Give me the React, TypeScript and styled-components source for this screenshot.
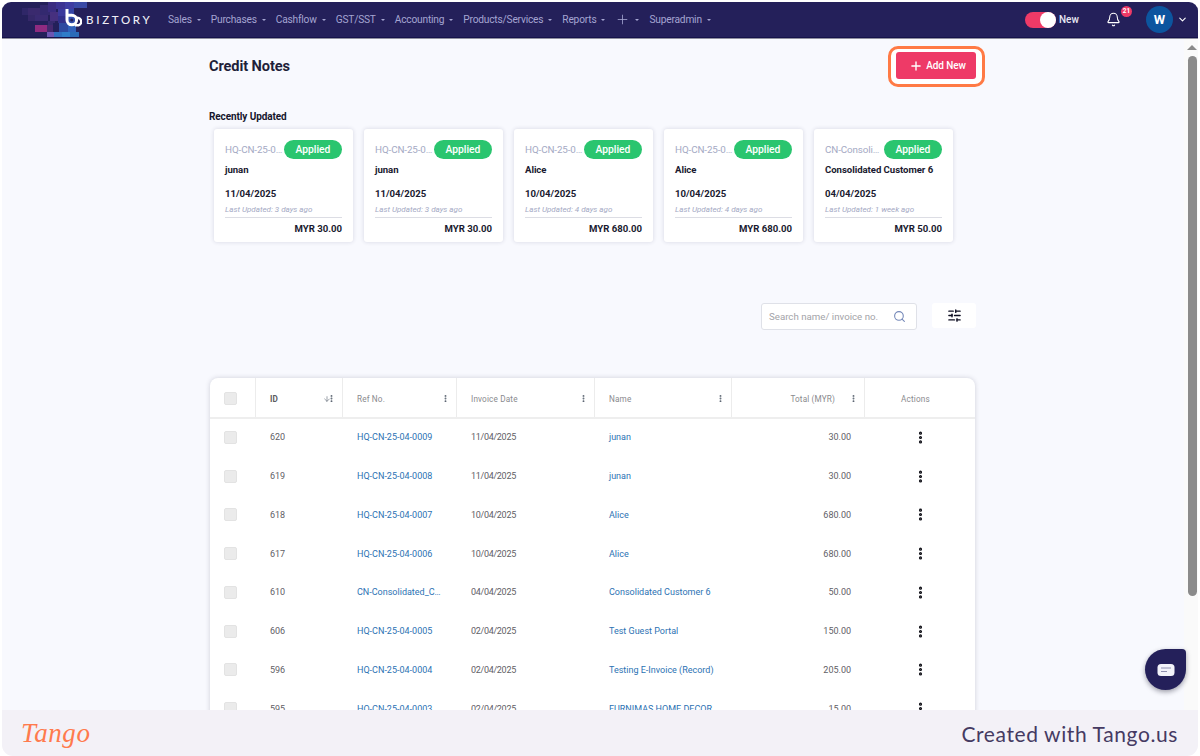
import React from "react";
import styled, { createGlobalStyle } from "styled-components";
import { Bell, ChevronDown, Search, SlidersHorizontal, Plus, ArrowDown, MoreVertical } from "lucide-react";

const Global = createGlobalStyle`
  html, body { margin: 0; padding: 0; background: #fff; }
  body { font-family: Roboto, "Liberation Sans", sans-serif; }
  * { box-sizing: border-box; }
`;

const Page = styled.div`
  width: 1200px; height: 756px; padding: 2px 2px 0; overflow: hidden; background: #fff;
`;
const Win = styled.div`
  position: relative; width: 1196px; height: 754px; display: flex; flex-direction: column;
  border-radius: 9px 9px 11px 11px; overflow: hidden;
`;
const Header = styled.header`
  position: relative; flex: 0 0 36px; display: flex; align-items: center; background: #24205a;
  border-bottom: 1px solid #15124a; box-shadow: 0 1px 0 #8f8f9f; z-index: 2;
`;
const Mosaic = styled.svg`
  position: absolute; left: 18px; top: 0; width: 70px; height: 35px;
`;
const Brand = styled.div`
  position: relative; display: flex; align-items: center; margin-left: 62px; width: 104px; flex: none;
`;
const BrandMark = styled.svg`
  margin-top: -3px; flex: none;
`;
const BrandName = styled.span`
  font-family: Lato, "Open Sans", sans-serif; font-size: 11.5px; font-weight: 500; letter-spacing: 2.7px;
  color: #eeeef6; margin-left: 4px;
`;
const Nav = styled.nav`
  display: flex; align-items: center; gap: 10px; flex: 1;
`;
const NavItem = styled.span`
  display: flex; align-items: center; gap: 4px; font-size: 10.2px; letter-spacing: -0.2px; color: #a5a5d2; white-space: nowrap;
`;
const Caret = styled.i`
  width: 0; height: 0; border: 2px solid transparent; border-top: 2.5px solid #a5a5d2; border-bottom: 0;
  margin-left: 1px;
`;
const HeaderRight = styled.div`
  display: flex; align-items: center; padding-right: 10px;
`;
const Toggle = styled.div`
  position: relative; width: 31px; height: 16px; border-radius: 8px; background: #ee3a67;
`;
const Knob = styled.i`
  position: absolute; right: 0; top: 0; width: 16px; height: 16px; border-radius: 50%; background: #fff;
`;
const NewLabel = styled.span`
  width: 19px; font-size: 10px; font-weight: 500; color: #e8e8f4; margin: 0 28px 0 3px;
`;
const BellWrap = styled.div`
  position: relative; width: 16px; height: 16px; margin-right: 24px; color: #fff;
`;
const BellBadge = styled.span`
  position: absolute; left: 15px; top: -6px; width: 11px; height: 11px; border-radius: 50%; background: #ee3a67;
  color: #fff; font-size: 6.5px; font-weight: 700; line-height: 11px; text-align: center;
`;
const Avatar = styled.div`
  width: 27px; height: 27px; border-radius: 50%; background: #0c559f; color: #fff; font-size: 13px;
  font-weight: 700; line-height: 27px; text-align: center; margin-right: 4px;
`;

const Body = styled.div`
  flex: 1; min-height: 0; display: flex;
`;
const Main = styled.main`
  flex: 1; min-width: 0; background: #f8f9fe; padding: 0 208px 0 207px; overflow: hidden;
`;
const Track = styled.div`
  flex: 0 0 14px; background: #fafafa; display: flex; flex-direction: column; align-items: flex-end; padding: 7px 1px 0 0;
`;
const ArrowUp = styled.i`
  width: 0; height: 0; border: 5px solid transparent; border-bottom: 5px solid #8a8a8a; border-top: 0;
`;
const Thumb = styled.div`
  width: 9px; height: 540px; margin-top: 6px; background: #8b8b8b; border-radius: 5px;
`;

const TitleRow = styled.div`
  display: flex; justify-content: space-between; align-items: flex-start; padding-top: 14px; height: 73px;
`;
const Title = styled.h1`
  margin: 4.5px 0 0; font-size: 14.6px; font-weight: 700; letter-spacing: -0.1px; color: #1f1f3a; line-height: 18px;
`;
const AddWrap = styled.div`
  position: relative; isolation: isolate; width: 80px; height: 27px;
  &::before {
    content: ""; position: absolute; z-index: -1; inset: -6px -9px -8px -8px; background: #fff;
    border: 3px solid #ff7a45; border-radius: 10px;
  }
`;
const AddButton = styled.button`
  width: 100%; height: 100%; border: 0; border-radius: 3px; background: #ee3a67; color: #fff;
  display: flex; align-items: center; justify-content: center; gap: 3px; padding: 0 0 0 3px;
  font: 500 10px Roboto, sans-serif; letter-spacing: -0.1px;
`;
const SubTitle = styled.h2`
  margin: 0; font-size: 10px; font-weight: 700; letter-spacing: -0.1px; color: #16162c; line-height: 12px;
`;
const Cards = styled.div`
  display: flex; gap: 11px; margin: 6px 0 0 5px;
`;
const Card = styled.article`
  width: 139px; height: 113px; flex: none; background: #fff; border-radius: 3px; padding: 11px 11px 0 11px;
  box-shadow: 0 0 4px rgba(40, 40, 80, .16);
`;
const CardTop = styled.div`
  display: flex; align-items: center; justify-content: space-between; height: 19px;
`;
const CardRef = styled.span`
  flex: 0 0 59px; font-size: 9.8px; letter-spacing: -.1px; color: #a4a9c4; white-space: nowrap; overflow: hidden; text-overflow: ellipsis;
`;
const Pill = styled.span`
  width: 58px; height: 19px; border-radius: 10px; background: #2ac56f; color: #fff; font-size: 10.3px;
  font-weight: 500; line-height: 19px; text-align: center;
`;
const CardName = styled.div`
  margin-top: 5px; height: 12px; font-size: 9.6px; font-weight: 700; line-height: 12px; color: #1a1a30; letter-spacing: -0.05px; white-space: nowrap;
`;
const CardDate = styled.div`
  margin-top: 12px; font-size: 9.6px; font-weight: 700; line-height: 12px; color: #1a1a30;
`;
const CardUpdated = styled.div`
  margin-top: 5px; font-size: 8px; font-style: italic; line-height: 10px; color: #a4a9c4; padding-bottom: 2px; border-bottom: 1px solid #dcdde4;
`;
const CardTotal = styled.div`
  margin-top: 5px; font-size: 9.6px; font-weight: 700; line-height: 12px; color: #1a1a30; text-align: right;
`;

const Tools = styled.div`
  display: flex; justify-content: flex-end; gap: 15px; margin-top: 61px;
`;
const SearchBox = styled.div`
  width: 156px; height: 27px; background: #fff; border: 1px solid #dfe1e8; border-radius: 3px; display: flex;
  align-items: center; justify-content: space-between; padding: 0 10px 0 7px; font-size: 9.7px; color: #a3a3a8;
`;
const FilterButton = styled.div`
  width: 44px; height: 25px; background: #fff; border-radius: 3px; display: flex; align-items: center; justify-content: center; color: #0e0e22;
`;

const Table = styled.section`
  margin: 48px 1px 0 1px; background: #fff; border-radius: 8px 8px 0 0; box-shadow: 0 0 5px rgba(40, 40, 70, .2);
`;
const columns = "46px 87px 114px 138px 137px 133px 1fr";
const HeadRow = styled.div`
  display: grid; grid-template-columns: ${columns}; height: 41px; border-bottom: 2px solid #eeeeee;
`;
const HeadCell = styled.div<{ $align?: string }>`
  display: flex; align-items: center; justify-content: ${(p) => p.$align || "space-between"};
  padding: 2px 6px 0 14px; border-right: 1px solid #ececec; font-size: 8.2px; letter-spacing: .15px; color: #8a8a8e;
  &:last-child { border-right: 0; padding: 2px 9px 0 0; }
`;
const CheckCell = styled(HeadCell)`
  padding: 2px 5px 0 0; justify-content: center;
`;
const IdLabel = styled.span`
  font-weight: 700; color: #5c5c60;
`;
const TotalLabel = styled.span`
  margin-left: auto; margin-right: 14px;
`;
const HeadIcons = styled.span`
  display: flex; align-items: center; color: #57616e;
`;
const SortArrow = styled(ArrowDown)`
  margin-right: -4px;
`;
const Row = styled.div`
  display: grid; grid-template-columns: ${columns}; height: 38.75px; padding-bottom: 2px; align-items: center; font-size: 9px; color: #5f6066;
`;
const Cell = styled.div`
  padding: 0 0 0 14px; white-space: nowrap; overflow: hidden; text-overflow: ellipsis;
`;
const DateCell = styled(Cell)`
  letter-spacing: -.3px;
`;
const RowCheck = styled.div`
  display: flex; justify-content: center; padding-right: 5px;
`;
const LinkCell = styled(Cell)`
  color: #2c72b3; padding-right: 15px;
`;
const AmountCell = styled.div`
  text-align: right; padding-right: 14px;
`;
const ActionCell = styled.div`
  display: flex; justify-content: center; color: #0d0d14;
`;
const Check = styled.i`
  display: block; width: 13px; height: 13px; background: #ebebeb; border: 1px solid #e3e3e3; border-radius: 2px;
`;

const Chat = styled.div`
  position: absolute; left: 1143px; top: 647px; width: 41px; height: 41px; background: #24205a;
  border-radius: 50% 4px 50% 50%; display: flex; align-items: center; justify-content: center;
  box-shadow: 0 2px 5px rgba(20, 20, 40, .4); z-index: 3;
`;
const Footer = styled.footer`
  position: relative; z-index: 4; flex: 0 0 46px; background: #f3f1f7; display: flex; align-items: center; justify-content: space-between;
  padding: 0 20px 0 19px;
`;
const TangoLogo = styled.span`
  font-family: "Liberation Serif", serif; font-style: italic; font-size: 27px; color: #ff7a4d; letter-spacing: .6px;
  line-height: 46px;
`;
const Credit = styled.span`
  font-family: Lato, "Open Sans", sans-serif; font-size: 21px; letter-spacing: .6px; color: #453a62;
`;

const mosaic: [number, number, number, number, string][] = [
  [2, 6, 13, 7, "#2f2768"], [8, 6, 12, 7, "#3a2a6e"], [8, 13, 7, 6, "#352869"], [20, 3, 10, 10, "#33296f"],
  [15, 13, 13, 6, "#3a2b72"], [28, 0, 8, 10, "#3a2c80"], [36, 0, 9, 7, "#3c3392"], [45, 0, 9, 7, "#3f3da2"],
  [54, 0, 13, 6, "#3a4aa6"], [30, 10, 8, 9, "#46307f"], [38, 7, 8, 7, "#3b3a9c"], [46, 7, 8, 7, "#3545a6"],
  [38, 14, 9, 7, "#32308a"], [47, 14, 9, 7, "#3350ae"], [28, 19, 7, 4, "#372a6e"], [15, 23, 12, 7, "#8f2b80"],
  [27, 23, 6, 7, "#45296f"], [33, 21, 6, 9, "#23205a"], [39, 21, 9, 9, "#2d4aa0"], [48, 21, 8, 9, "#2f62ba"],
  [27, 30, 7, 5, "#6c56b3"], [34, 30, 8, 5, "#2f6fbf"], [42, 30, 8, 5, "#2f7dc9"], [50, 30, 9, 5, "#2a6bb8"],
];

const cards = [
  { ref: "HQ-CN-25-04-0009", name: "junan", date: "11/04/2025", up: "3 days ago", total: "30.00" },
  { ref: "HQ-CN-25-04-0008", name: "junan", date: "11/04/2025", up: "3 days ago", total: "30.00" },
  { ref: "HQ-CN-25-04-0007", name: "Alice", date: "10/04/2025", up: "4 days ago", total: "680.00" },
  { ref: "HQ-CN-25-04-0006", name: "Alice", date: "10/04/2025", up: "4 days ago", total: "680.00" },
  { ref: "CN-Consolidated_Customer", name: "Consolidated Customer 6", date: "04/04/2025", up: "1 week ago", total: "50.00" },
];
const rows = [
  ["620", "HQ-CN-25-04-0009", "11/04/2025", "junan", "30.00"],
  ["619", "HQ-CN-25-04-0008", "11/04/2025", "junan", "30.00"],
  ["618", "HQ-CN-25-04-0007", "10/04/2025", "Alice", "680.00"],
  ["617", "HQ-CN-25-04-0006", "10/04/2025", "Alice", "680.00"],
  ["610", "CN-Consolidated_Customer", "04/04/2025", "Consolidated Customer 6", "50.00"],
  ["606", "HQ-CN-25-04-0005", "02/04/2025", "Test Guest Portal", "150.00"],
  ["596", "HQ-CN-25-04-0004", "02/04/2025", "Testing E-Invoice (Record)", "205.00"],
  ["595", "HQ-CN-25-04-0003", "02/04/2025", "FURNIMAS HOME DECOR", "15.00"],
];
const navItems = ["Sales", "Purchases", "Cashflow", "GST/SST", "Accounting", "Products/Services", "Reports"];
const heads = ["Ref No.", "Invoice Date", "Name"];

const HeadDots = () => (
  <HeadIcons>
    <MoreVertical size={9} strokeWidth={3} />
  </HeadIcons>
);

export default function App() {
  return (
    <Page>
      <Global />
      <Win>
        <Header>
          <Mosaic viewBox="0 0 70 35">
            {mosaic.map(([x, y, w, h, c], i) => (
              <rect key={i} x={x} y={y} width={w} height={h} fill={c} />
            ))}
          </Mosaic>
          <Brand>
            <BrandMark width="18" height="18" viewBox="0 0 18 18">
              <path d="M3 0 V11 A4.8 4.8 0 1 0 7.8 6.2 H4" fill="none" stroke="#fff" strokeWidth="3" />
              <circle cx="7.8" cy="11" r="1.6" fill="#24205a" />
              <path d="M12 9 A3.6 3.6 0 0 1 14.8 16.2 H11" fill="none" stroke="#fff" strokeWidth="2.4" />
            </BrandMark>
            <BrandName>BIZTORY</BrandName>
          </Brand>
          <Nav>
            {navItems.map((n) => (
              <NavItem key={n}>
                {n}
                <Caret />
              </NavItem>
            ))}
            <NavItem>
              <Plus size={15} strokeWidth={1.3} />
              <Caret />
            </NavItem>
            <NavItem>
              Superadmin
              <Caret />
            </NavItem>
          </Nav>
          <HeaderRight>
            <Toggle>
              <Knob />
            </Toggle>
            <NewLabel>New</NewLabel>
            <BellWrap>
              <Bell size={15} strokeWidth={1.7} />
              <BellBadge>21</BellBadge>
            </BellWrap>
            <Avatar>W</Avatar>
            <ChevronDown size={11} color="#fff" strokeWidth={2.4} />
          </HeaderRight>
        </Header>
        <Body>
          <Main>
            <TitleRow>
              <Title>Credit Notes</Title>
              <AddWrap>
                <AddButton>
                  <Plus size={14} strokeWidth={2.4} />
                  Add New
                </AddButton>
              </AddWrap>
            </TitleRow>
            <SubTitle>Recently Updated</SubTitle>
            <Cards>
              {cards.map((c) => (
                <Card key={c.ref}>
                  <CardTop>
                    <CardRef>{c.ref}</CardRef>
                    <Pill>Applied</Pill>
                  </CardTop>
                  <CardName>{c.name}</CardName>
                  <CardDate>{c.date}</CardDate>
                  <CardUpdated>Last Updated: {c.up}</CardUpdated>
                  <CardTotal>MYR {c.total}</CardTotal>
                </Card>
              ))}
            </Cards>
            <Tools>
              <SearchBox>
                Search name/ invoice no.
                <Search size={13} color="#7488b8" strokeWidth={2} />
              </SearchBox>
              <FilterButton>
                <SlidersHorizontal size={15} strokeWidth={2.2} />
              </FilterButton>
            </Tools>
            <Table>
              <HeadRow>
                <CheckCell>
                  <Check />
                </CheckCell>
                <HeadCell>
                  <IdLabel>ID</IdLabel>
                  <HeadIcons>
                    <SortArrow size={8} strokeWidth={1.8} />
                    <MoreVertical size={9} strokeWidth={3} />
                  </HeadIcons>
                </HeadCell>
                {heads.map((h) => (
                  <HeadCell key={h}>
                    {h}
                    <HeadDots />
                  </HeadCell>
                ))}
                <HeadCell>
                  <TotalLabel>Total (MYR)</TotalLabel>
                  <HeadDots />
                </HeadCell>
                <HeadCell $align="center">Actions</HeadCell>
              </HeadRow>
              {rows.map((r) => (
                <Row key={r[0]}>
                  <RowCheck>
                    <Check />
                  </RowCheck>
                  <Cell>{r[0]}</Cell>
                  <LinkCell>{r[1]}</LinkCell>
                  <DateCell>{r[2]}</DateCell>
                  <LinkCell>{r[3]}</LinkCell>
                  <AmountCell>{r[4]}</AmountCell>
                  <ActionCell>
                    <MoreVertical size={15} strokeWidth={3} />
                  </ActionCell>
                </Row>
              ))}
            </Table>
          </Main>
          <Track>
            <ArrowUp />
            <Thumb />
          </Track>
        </Body>
        <Chat>
          <svg width="18" height="14" viewBox="0 0 18 14">
            <rect x="0.5" y="1" width="17" height="12" rx="3.5" fill="#f3f3fa" />
            <path d="M4 5h10M4 8.5h6" stroke="#8f8fb0" strokeWidth="1.2" />
          </svg>
        </Chat>
        <Footer>
          <TangoLogo>Tango</TangoLogo>
          <Credit>Created with Tango.us</Credit>
        </Footer>
      </Win>
    </Page>
  );
}
